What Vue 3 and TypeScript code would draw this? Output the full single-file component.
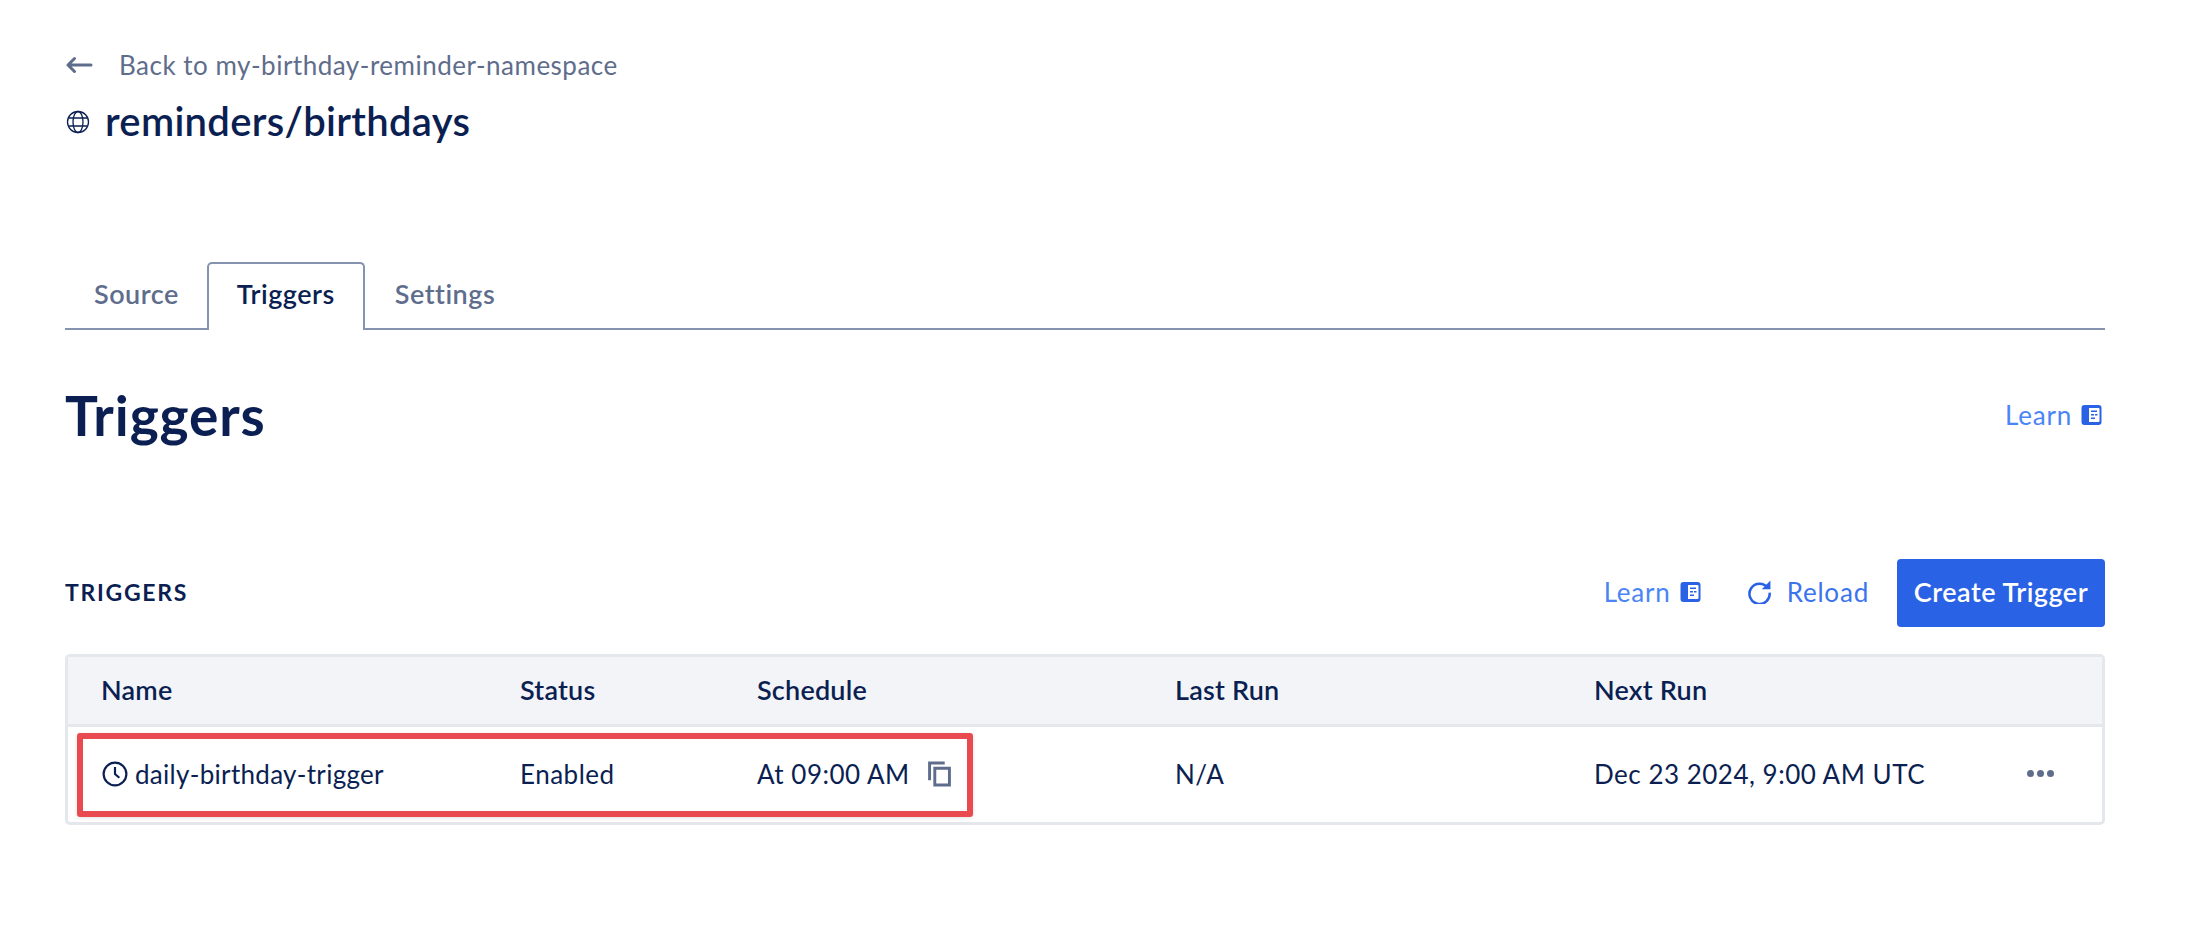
<script setup lang="ts">
const tabs = [
  { label: 'Source', active: false },
  { label: 'Triggers', active: true },
  { label: 'Settings', active: false },
]
const headers = ['Name', 'Status', 'Schedule', 'Last Run', 'Next Run', '']
</script>

<template>
  <main class="page">
    <a class="back">
      <svg class="back-icon" viewBox="0 0 28 18" fill="none">
        <path d="M26 9H3M9.500 2.500 3 9l6.500 6.500" stroke="currentColor" stroke-width="3" stroke-linecap="round" stroke-linejoin="round" />
      </svg>
      <span>Back to my-birthday-reminder-namespace</span>
    </a>
    <div class="title-row">
      <svg class="globe" viewBox="0 0 24 24" fill="none" stroke="currentColor" stroke-width="1.3">
        <circle cx="12" cy="12" r="10.5" />
        <ellipse cx="12" cy="12" rx="5" ry="10.5" />
        <path d="M2.5 8h19M2.500 16h19" />
      </svg>
      <h1>reminders/birthdays</h1>
    </div>

    <nav class="tabs">
      <div v-for="t in tabs" :key="t.label" class="tab" :class="{ active: t.active }">{{ t.label }}</div>
    </nav>

    <div class="heading-row">
      <h2>Triggers</h2>
      <a class="link learn">Learn
        <svg class="book" viewBox="0 0 20 20">
          <path fill-rule="evenodd" d="M3 0h14a3 3 0 0 1 3 3v14a3 3 0 0 1-3 3H3a3 3 0 0 1-3-3V3a3 3 0 0 1 3-3Zm4.500 3v14H17a1 1 0 0 0 1-1V4a1 1 0 0 0-1-1H7.500Zm2 2.500h6V7h-6V5.500Zm0 3.500h3v1.500h-3V9Zm4 0H16v1.500h-2.500V9Zm-4 3.500h4V14h-4v-1.500Z" fill="currentColor" />
        </svg>
      </a>
    </div>

    <div class="section-row">
      <div class="section-label">TRIGGERS</div>
      <div class="actions">
        <a class="link learn">Learn
          <svg class="book" viewBox="0 0 20 20">
            <path fill-rule="evenodd" d="M3 0h14a3 3 0 0 1 3 3v14a3 3 0 0 1-3 3H3a3 3 0 0 1-3-3V3a3 3 0 0 1 3-3Zm4.500 3v14H17a1 1 0 0 0 1-1V4a1 1 0 0 0-1-1H7.500Zm2 2.500h6V7h-6V5.500Zm0 3.500h3v1.500h-3V9Zm4 0H16v1.500h-2.500V9Zm-4 3.500h4V14h-4v-1.500Z" fill="currentColor" />
          </svg>
        </a>
        <a class="link reload">
          <svg class="reload-icon" viewBox="0 0 24 24" fill="none">
            <path d="M19.900 8.500A9.700 9.700 0 1 0 21.700 13" stroke="currentColor" stroke-width="2.400" />
            <path d="M22.500 1.500v8.300h-8.300z" fill="currentColor" />
          </svg>
          Reload
        </a>
        <button class="create">Create Trigger</button>
      </div>
    </div>

    <div class="table">
      <div class="row head">
        <div v-for="h in headers" :key="h" class="cell">{{ h }}</div>
      </div>
      <div class="row body">
        <div class="cell name">
          <svg class="clock" viewBox="0 0 24 24" fill="none" stroke="currentColor" stroke-width="2">
            <circle cx="12" cy="12" r="10.500" />
            <path d="M12 5.500V12l4 3.500" />
          </svg>
          daily-birthday-trigger
        </div>
        <div class="cell">Enabled</div>
        <div class="cell schedule">
          At 09:00 AM
          <svg class="copy" viewBox="0 0 22 24" fill="none" stroke="currentColor" stroke-width="2.800">
            <path d="M1.500 18V1.500H16" />
            <path d="M6.500 6.500h14v16h-14z" />
          </svg>
        </div>
        <div class="cell">N/A</div>
        <div class="cell">Dec 23 2024, 9:00 AM UTC</div>
        <div class="cell dots"><i></i><i></i><i></i></div>
      </div>
      <div class="highlight"></div>
    </div>
  </main>
</template>

<style>
html, body { background: #fff; }
</style>

<style scoped>
.page {
  box-sizing: border-box;
  width: 2202px;
  height: 946px;
  padding: 48px 97px 0 65px;
  font-family: Lato, "Open Sans", sans-serif;
  color: #0b1f52;
  overflow: hidden;
}
.back {
  display: flex;
  align-items: center;
  height: 34px;
  color: #5f6d8c;
  font-size: 26px;
  letter-spacing: 0.5px;
}
.back-icon { width: 28px; height: 18px; margin-right: 26px; }
.title-row { display: flex; align-items: center; height: 54px; margin-top: 12px; }
.globe { width: 24px; height: 24px; margin: 2px 15px 0 1px; color: #0b1f52; }
h1 { margin: 0; font-size: 40px; font-weight: 600; line-height: 1; letter-spacing: 0.3px; }

.tabs {
  display: flex;
  margin-top: 114px;
  height: 66px;
  border-bottom: 2px solid #8592b0;
}
.tab {
  box-sizing: border-box;
  height: 68px;
  padding: 0 28px 7px;
  display: flex;
  align-items: center;
  font-size: 27px;
  font-weight: 600;
  letter-spacing: 0.5px;
  color: #5f6d8c;
  border: 2px solid transparent;
  border-bottom: 0;
  border-radius: 5px 5px 0 0;
}
.tab:first-child { padding-left: 27px; padding-right: 26px; }
.tab.active {
  color: #0b1f52;
  background: #fff;
  border-color: #8592b0;
  height: 68px;
}
.heading-row { display: flex; align-items: center; justify-content: space-between; margin-top: 47px; height: 76px; padding-right: 3px; }
h2 { margin: 0; font-size: 55px; font-weight: 700; line-height: 1; letter-spacing: 0.9px; }
.link { display: inline-flex; align-items: center; color: #4a84f5; font-size: 26px; letter-spacing: 0.8px; }
.actions .link { padding-bottom: 3px; }
.book { width: 21px; height: 20px; margin-left: 9px; color: #2a62e6; }
.section-row { display: flex; align-items: center; justify-content: space-between; margin-top: 106px; height: 68px; }
.section-label { font-size: 23px; font-weight: 700; letter-spacing: 1.7px; padding-bottom: 2px; }
.actions { display: flex; align-items: center; }
.reload { margin-left: 46px; color: #3b74ee; }
.reload-icon { width: 25px; height: 25px; margin-right: 15px; color: #2a62e6; }
.create {
  margin-left: 28px;
  width: 208px;
  height: 68px;
  border: 0;
  border-radius: 4px;
  background: #2a62e6;
  color: #fff;
  font: 600 27px Lato, sans-serif;
  letter-spacing: 0.5px;
  padding: 0 0 3px;
}
.table {
  position: relative;
  box-sizing: border-box;
  height: 171px;
  margin-top: 27px;
  border: 3px solid #e4e7ec;
  border-radius: 5px;
}
.row { display: grid; grid-template-columns: 452px 237px 418px 419px 420px 1fr; align-items: center; }
.head { box-sizing: border-box; height: 70px; padding-bottom: 3px; background: #f3f4f8; border-bottom: 3px solid #e4e7ec; font-weight: 600; font-size: 27px; letter-spacing: 0.2px; }
.body { box-sizing: border-box; height: 95px; padding-bottom: 2px; font-size: 26px; letter-spacing: 0.5px; }
.cell { white-space: nowrap; }
.row .cell:first-child { padding-left: 33px; }
.name { display: flex; align-items: center; letter-spacing: 0.3px; }
.clock { width: 26px; height: 26px; margin-left: 1px; margin-right: 7px; flex: none; }
.schedule { display: flex; align-items: center; }
.copy { width: 23px; height: 26px; margin-left: 18px; color: #5f6d8c; }
.dots { display: flex; gap: 3px; margin-left: 13px; }
.dots i { width: 7px; height: 7px; border-radius: 50%; background: #5f6d8c; }
.highlight {
  position: absolute;
  left: 9px;
  top: 76px;
  width: 896px;
  height: 84px;
  box-sizing: border-box;
  border: 6px solid #e84a4f;
  border-radius: 3px;
  box-shadow: 0 1px 4px rgba(0, 0, 0, 0.12);
}
</style>
